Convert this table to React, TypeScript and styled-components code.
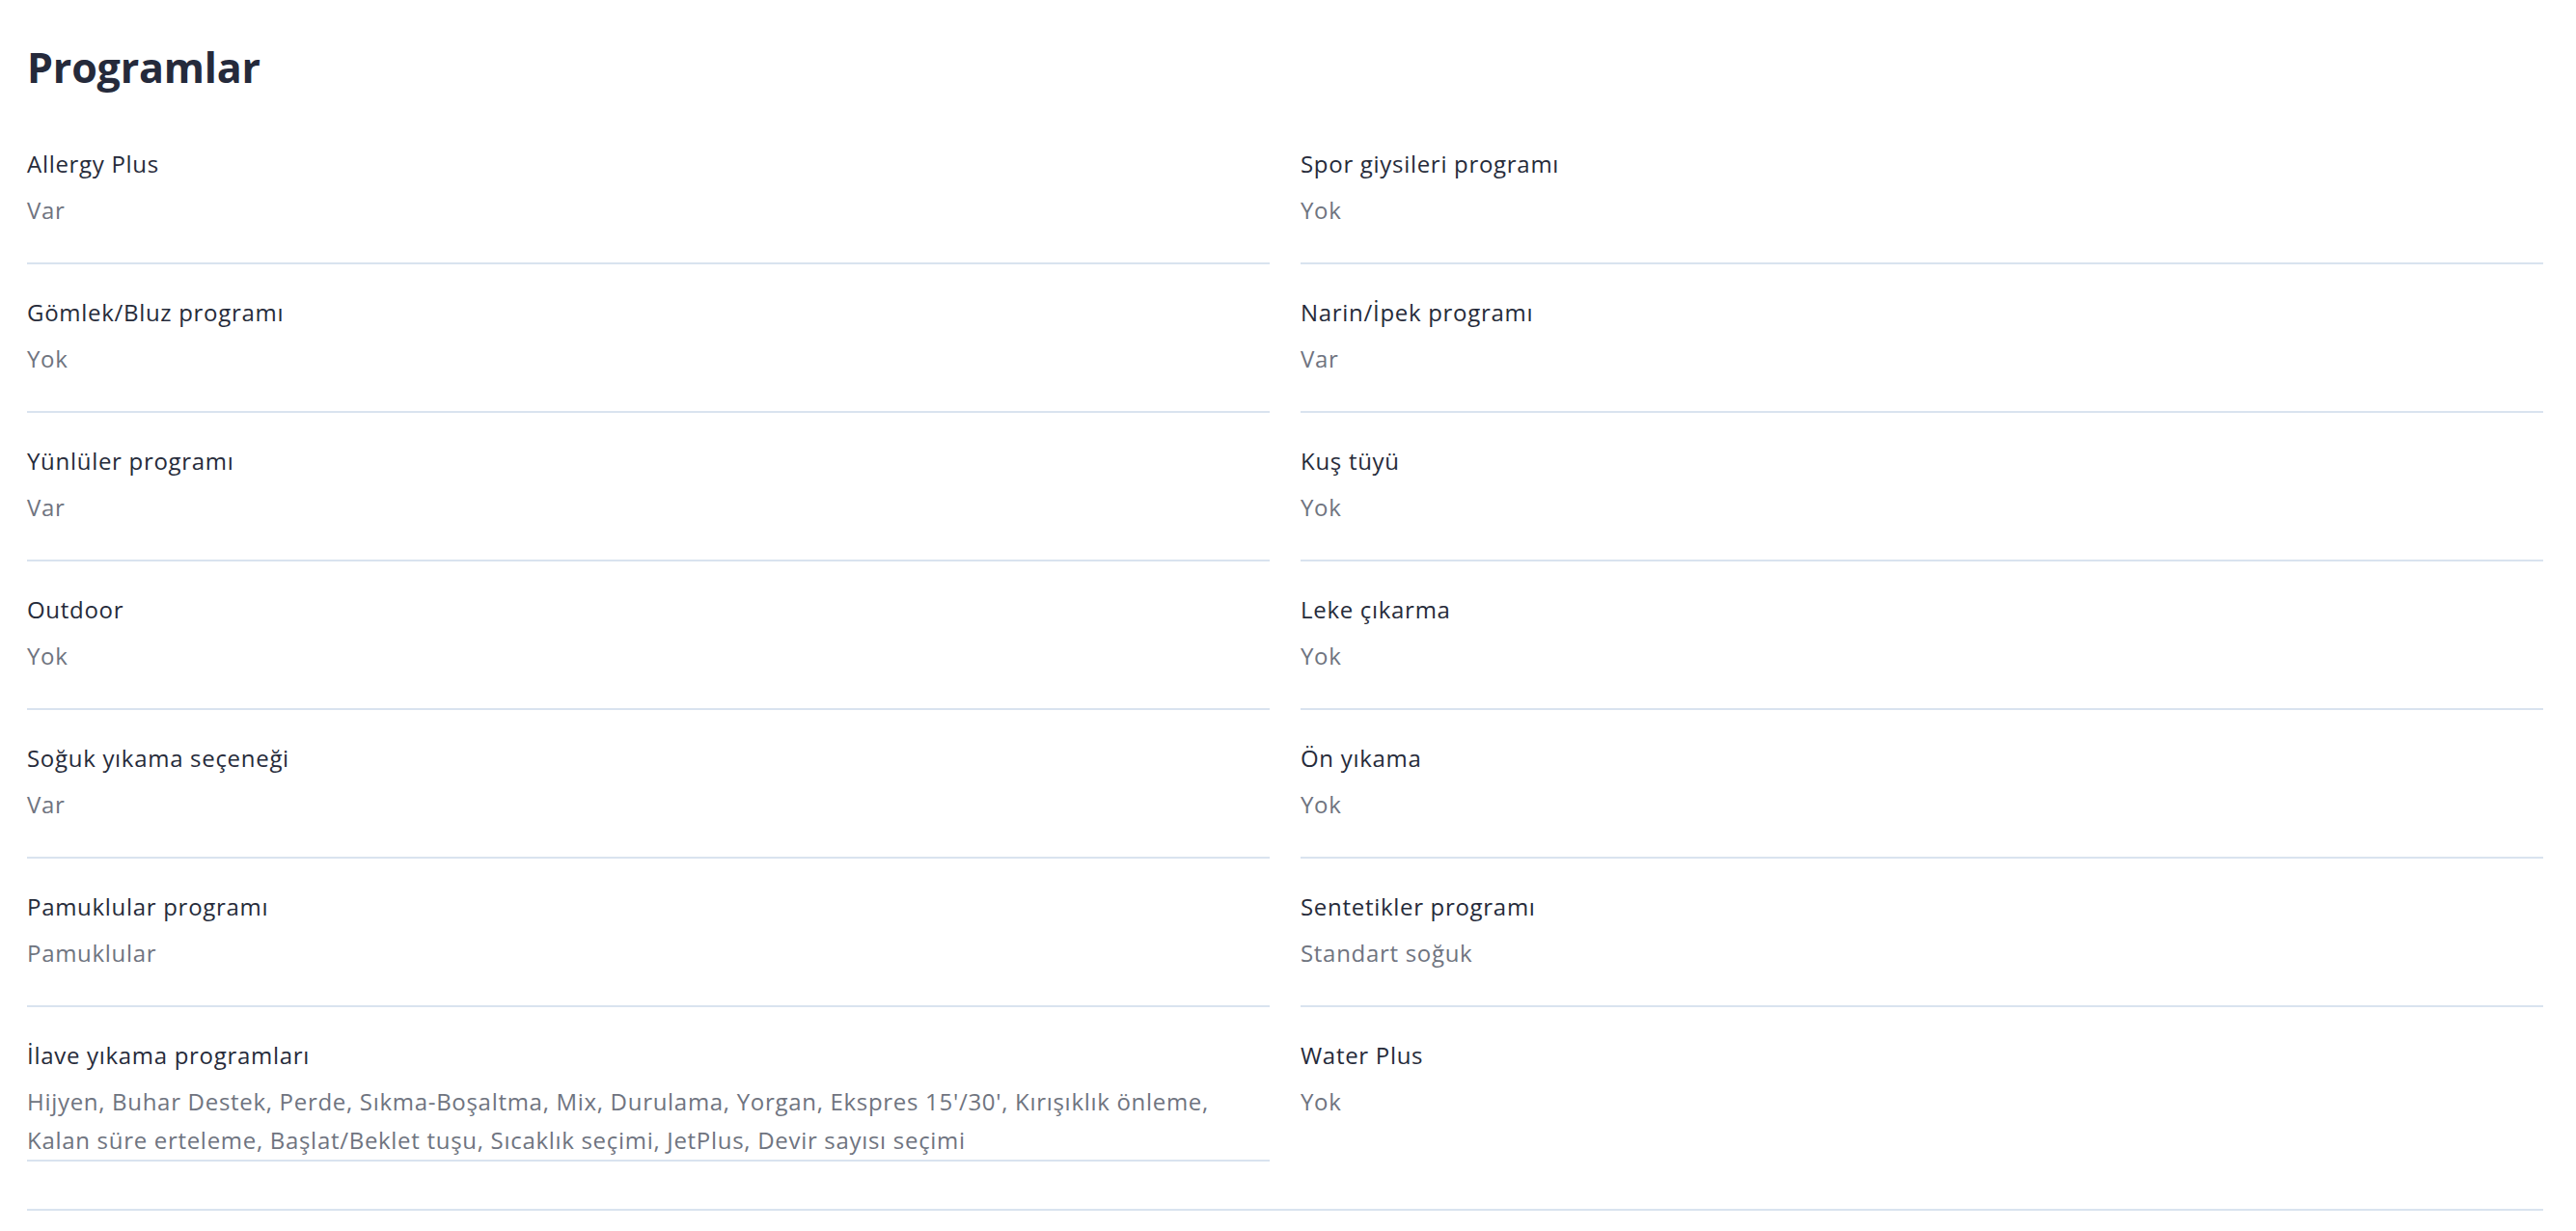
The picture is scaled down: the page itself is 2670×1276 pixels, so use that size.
import React from "react";
import styled, { createGlobalStyle } from "styled-components";

const GlobalStyle = createGlobalStyle`
  html, body {
    margin: 0;
    padding: 0;
    background: #ffffff;
  }
  body {
    font-family: "Open Sans", "Noto Sans", "Liberation Sans", sans-serif;
    -webkit-font-smoothing: antialiased;
  }
  * { box-sizing: border-box; }
`;

const Page = styled.main`
  padding: 44px 34px 0 28px;
`;

const Title = styled.h2`
  margin: 0 0 24px;
  font-family: "Open Sans", "Noto Sans", sans-serif;
  font-weight: 700;
  font-size: 43px;
  line-height: 52px;
  color: #252a3b;
  letter-spacing: -0.2px;
`;

const SpecGrid = styled.dl`
  margin: 0;
  display: grid;
  grid-template-columns: 1fr 1fr;
  column-gap: 32px;
  padding-bottom: 49px;
  border-bottom: 2px solid #d9e3ef;
`;

const SpecItem = styled.div`
  min-height: 154px;
  padding: 34px 24px 0 0;
  border-bottom: 2px solid #d9e3ef;

  &:last-child {
    border-bottom: none;
  }
`;

const SpecLabel = styled.dt`
  margin: 0;
  font-size: 24px;
  line-height: 32px;
  letter-spacing: 0.7px;
  color: #262b3a;
`;

const SpecValue = styled.dd`
  margin: 12px 0 0;
  font-size: 24px;
  line-height: 40px;
  letter-spacing: 0.7px;
  color: #6f7480;
`;

type Spec = { label: string; value: string };

const specs: Spec[] = [
  { label: "Allergy Plus", value: "Var" },
  { label: "Spor giysileri programı", value: "Yok" },
  { label: "Gömlek/Bluz programı", value: "Yok" },
  { label: "Narin/İpek programı", value: "Var" },
  { label: "Yünlüler programı", value: "Var" },
  { label: "Kuş tüyü", value: "Yok" },
  { label: "Outdoor", value: "Yok" },
  { label: "Leke çıkarma", value: "Yok" },
  { label: "Soğuk yıkama seçeneği", value: "Var" },
  { label: "Ön yıkama", value: "Yok" },
  { label: "Pamuklular programı", value: "Pamuklular" },
  { label: "Sentetikler programı", value: "Standart soğuk" },
  {
    label: "İlave yıkama programları",
    value:
      "Hijyen, Buhar Destek, Perde, Sıkma-Boşaltma, Mix, Durulama, Yorgan, Ekspres 15'/30', Kırışıklık önleme, Kalan süre erteleme, Başlat/Beklet tuşu, Sıcaklık seçimi, JetPlus, Devir sayısı seçimi",
  },
  { label: "Water Plus", value: "Yok" },
];

export default function App() {
  return (
    <>
      <GlobalStyle />
      <Page>
        <Title>Programlar</Title>
        <SpecGrid>
          {specs.map((s) => (
            <SpecItem key={s.label}>
              <SpecLabel>{s.label}</SpecLabel>
              <SpecValue>{s.value}</SpecValue>
            </SpecItem>
          ))}
        </SpecGrid>
      </Page>
    </>
  );
}
